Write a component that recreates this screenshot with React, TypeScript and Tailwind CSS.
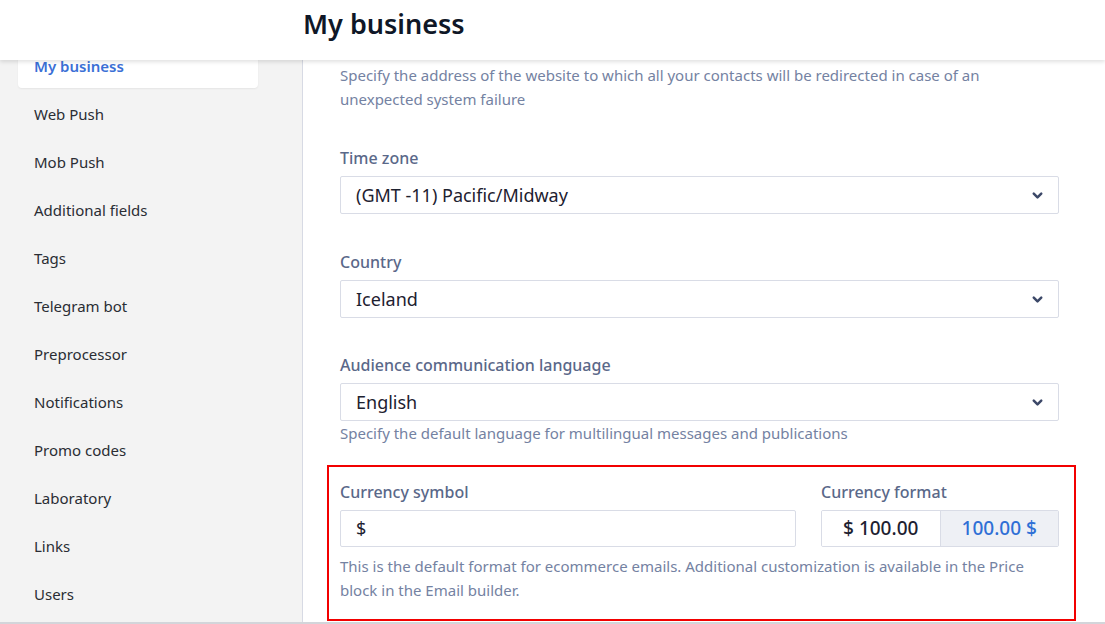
import { ChevronDown } from "lucide-react";

const navItems = [
  "My business",
  "Web Push",
  "Mob Push",
  "Additional fields",
  "Tags",
  "Telegram bot",
  "Preprocessor",
  "Notifications",
  "Promo codes",
  "Laboratory",
  "Links",
  "Users",
];

function SelectField({ label, value }: { label: string; value: string }) {
  return (
    <div>
      <div className="text-[16px] leading-6 font-medium text-[#5a6889]">{label}</div>
      <div className="mt-[6px] flex h-[38px] items-center justify-between rounded-[2px] border border-[#d9dce6] bg-white pl-[15px] pr-[13px]">
        <span className="text-[18px] text-[#1d2130]">{value}</span>
        <ChevronDown className="h-[15px] w-[15px] text-[#3c4868]" strokeWidth={4} />
      </div>
    </div>
  );
}

export default function App() {
  return (
    <div
      className="flex h-[624px] w-[1105px] flex-col overflow-hidden bg-white"
      style={{ fontFamily: '"Noto Sans", "Open Sans", sans-serif' }}
    >
      <header className="relative z-10 flex h-[60px] shrink-0 items-center bg-white pl-[303px] shadow-[0_2px_4px_rgba(0,0,0,0.12)]">
        <h1 className="-mt-[11px] text-[27px] font-semibold text-[#0f1727]">My business</h1>
      </header>

      <div className="flex min-h-0 flex-1 border-b-2 border-[#d3d5da]">
        <aside className="w-[303px] shrink-0 overflow-hidden border-r border-[#d7dae4] bg-[#f3f3f3]">
          <nav className="-mt-[16px] flex flex-col gap-1 pl-[18px] pr-[44px]">
            {navItems.map((item, i) => (
              <div
                key={item}
                className={
                  i === 0
                    ? "flex h-[44px] items-center rounded-[4px] bg-white px-4 text-[15px] font-semibold text-[#3b70d6] shadow-[0_1px_2px_rgba(0,0,0,0.06)]"
                    : "flex h-[44px] items-center px-4 text-[15px] text-[#2a2d34]"
                }
              >
                {item}
              </div>
            ))}
          </nav>
        </aside>

        <main className="min-w-0 flex-1 overflow-hidden pl-[37px] pr-[46px]">
          <p className="mt-[3px] text-[15px] leading-6 text-[#7482a2]">
            Specify the address of the website to which all your contacts will be redirected in case of an
            unexpected system failure
          </p>

          <div className="mt-[35px]">
            <SelectField label="Time zone" value="(GMT -11) Pacific/Midway" />
          </div>
          <div className="mt-[36px]">
            <SelectField label="Country" value="Iceland" />
          </div>
          <div className="mt-[35px]">
            <SelectField label="Audience communication language" value="English" />
            <p className="text-[15px] leading-6 text-[#7482a2]">
              Specify the default language for multilingual messages and publications
            </p>
          </div>

          <div className="-mr-[17px] -ml-[13px] mt-[20px] border-2 border-[#f20000] pt-[13px] pr-[15px] pb-[17px] pl-[11px]">
            <div className="flex gap-[25px]">
              <div className="flex-1">
                <div className="text-[16px] leading-6 font-medium text-[#5a6889]">Currency symbol</div>
                <div className="mt-[6px] flex h-[37px] items-center rounded-[2px] border border-[#d9dce6] bg-white pl-[15px]">
                  <span className="text-[18px] text-[#1d2130]">$</span>
                </div>
              </div>
              <div className="w-[238px]">
                <div className="text-[16px] leading-6 font-medium text-[#5a6889]">Currency format</div>
                <div className="mt-[6px] flex h-[37px] overflow-hidden rounded-[2px] border border-[#d9dce6]">
                  <div className="flex flex-1 items-center justify-center bg-white text-[19px] font-medium text-[#1d2130]">
                    $ 100.00
                  </div>
                  <div className="flex flex-1 items-center justify-center border-l border-[#d9dce6] bg-[#eef0f5] text-[19px] font-medium text-[#2f6fd6]">
                    100.00 $
                  </div>
                </div>
              </div>
            </div>
            <p className="mt-[7px] text-[15px] leading-6 text-[#7482a2]">
              This is the default format for ecommerce emails. Additional customization is available in the Price
              block in the Email builder.
            </p>
          </div>
        </main>
      </div>
    </div>
  );
}
